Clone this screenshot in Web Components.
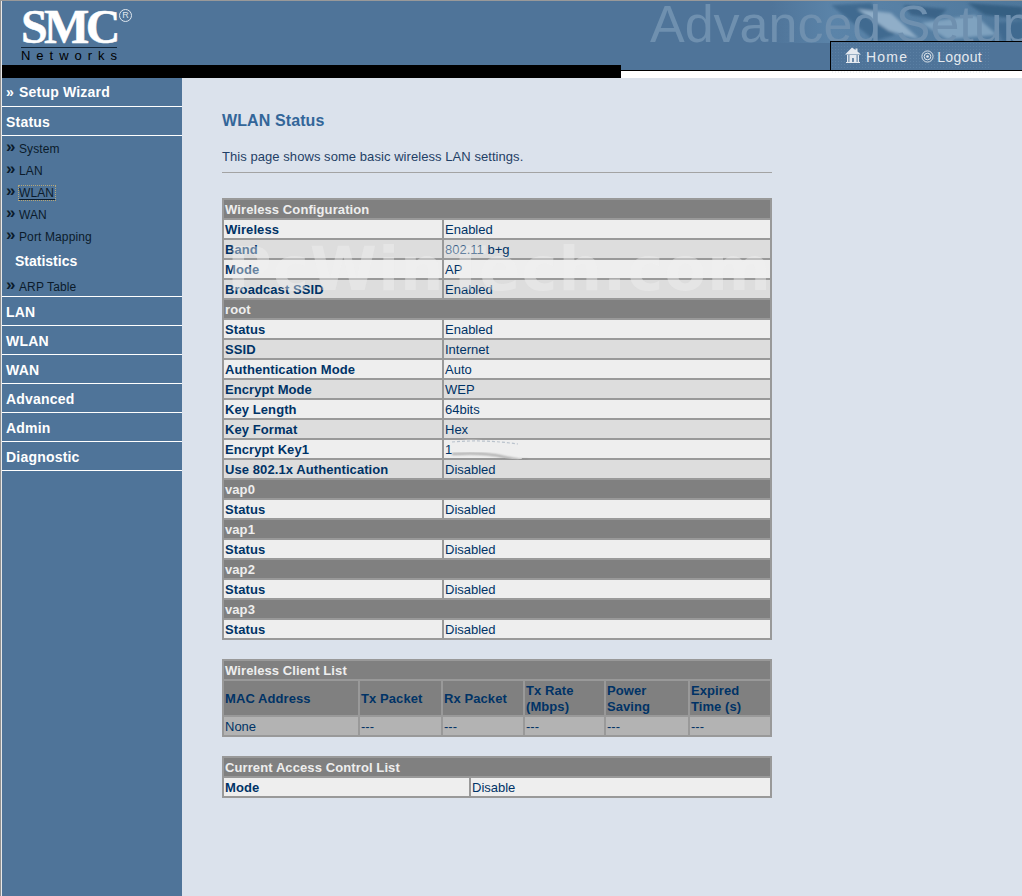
<!DOCTYPE html>
<html>
<head>
<meta charset="utf-8">
<title>WLAN Status</title>
<style>
html, body { margin: 0; padding: 0; background: #dbe2ec; }
body { font-family: "Liberation Sans", Arial, sans-serif; font-size: 12px; }
</style>
</head>
<body>
<router-page>
    <router-header slot="header"></router-header>
    <router-sidebar slot="side">
        <nav-top wizard>Setup Wizard</nav-top>
        <nav-top>Status</nav-top>
        <nav-group>
            <nav-sub>System</nav-sub>
            <nav-sub>LAN</nav-sub>
            <nav-sub current>WLAN</nav-sub>
            <nav-sub>WAN</nav-sub>
            <nav-sub>Port Mapping</nav-sub>
            <nav-heading>Statistics</nav-heading>
            <nav-sub>ARP Table</nav-sub>
        </nav-group>
        <nav-top>LAN</nav-top>
        <nav-top>WLAN</nav-top>
        <nav-top>WAN</nav-top>
        <nav-top>Advanced</nav-top>
        <nav-top>Admin</nav-top>
        <nav-top>Diagnostic</nav-top>
    </router-sidebar>
    <status-panel heading="WLAN Status" intro="This page shows some basic wireless LAN settings.">
        <info-table heading="Wireless Configuration" cols="218px 326px">
            <info-row><b>Wireless</b><span>Enabled</span></info-row>
            <info-row alt><b>Band</b><span>802.11 b+g</span></info-row>
            <info-row><b>Mode</b><span>AP</span></info-row>
            <info-row alt><b>Broadcast SSID</b><span>Enabled</span></info-row>
            <info-row section><b>root</b></info-row>
            <info-row><b>Status</b><span>Enabled</span></info-row>
            <info-row alt><b>SSID</b><span>Internet</span></info-row>
            <info-row><b>Authentication Mode</b><span>Auto</span></info-row>
            <info-row alt><b>Encrypt Mode</b><span>WEP</span></info-row>
            <info-row><b>Key Length</b><span>64bits</span></info-row>
            <info-row alt><b>Key Format</b><span>Hex</span></info-row>
            <info-row><b>Encrypt Key1</b><span>1<key-smudge></key-smudge></span></info-row>
            <info-row alt><b>Use 802.1x Authentication</b><span>Disabled</span></info-row>
            <info-row section><b>vap0</b></info-row>
            <info-row><b>Status</b><span>Disabled</span></info-row>
            <info-row section><b>vap1</b></info-row>
            <info-row><b>Status</b><span>Disabled</span></info-row>
            <info-row section><b>vap2</b></info-row>
            <info-row><b>Status</b><span>Disabled</span></info-row>
            <info-row section><b>vap3</b></info-row>
            <info-row><b>Status</b><span>Disabled</span></info-row>
        </info-table>
        <info-table heading="Wireless Client List" cols="134px 81px 80px 79px 82px 80px">
            <info-row head><b>MAC Address</b><b>Tx Packet</b><b>Rx Packet</b><b>Tx Rate (Mbps)</b><b>Power Saving</b><b>Expired Time (s)</b></info-row>
            <info-row muted><span>None</span><span>---</span><span>---</span><span>---</span><span>---</span><span>---</span></info-row>
        </info-table>
        <info-table heading="Current Access Control List" cols="245px 299px">
            <info-row><b>Mode</b><span>Disable</span></info-row>
        </info-table>
    </status-panel>
</router-page>

<script>
function shadow(el, html) {
    el.attachShadow({ mode: "open" }).innerHTML = html;
}

class RouterPage extends HTMLElement {
    constructor() {
        super();
        shadow(this, `
            <style>
            :host {
                display: flex;
                flex-direction: column;
                width: 1022px;
                height: 896px;
                overflow: hidden;
                box-sizing: border-box;
                border-top: 1px solid #999;
                border-left: 1px solid #8f8f8f;
                background: #dbe2ec;
            }
            .body {
                flex: 1;
                display: flex;
                min-height: 0;
                padding-left: 1px;
                background: #e9e9e9;
            }
            ::slotted(status-panel) { flex: 1; }
            </style>
            <slot name="header"></slot>
            <div class="body"><slot name="side"></slot><slot></slot></div>
        `);
    }
}

class RouterHeader extends HTMLElement {
    constructor() {
        super();
        shadow(this, `
            <style>
            :host {
                display: flex;
                height: 77px;
                background: #fff;
            }
            .left {
                width: 619px;
                display: flex;
                flex-direction: column;
                padding-left: 1px;
                background: #e9e9e9;
            }
            .logo {
                height: 64px;
                background: #4f7499;
                padding-left: 19px;
            }
            .bar { height: 13px; background: #000; }
            .right {
                flex: 1;
                display: flex;
                flex-direction: column;
                min-width: 0;
            }
            .banner {
                position: relative;
                height: 70px;
                flex: none;
                box-sizing: border-box;
                border-bottom: 1px solid #000;
                background: #4f7499;
                overflow: hidden;
            }
            .texture { position: absolute; left: 150px; top: 0; }
            .ghost {
                position: absolute;
                left: 29px;
                top: -7px;
                font-size: 52px;
                line-height: 60px;
                white-space: nowrap;
                color: #6f90af;
            }
            .links {
                position: absolute;
                left: 209px;
                right: 0;
                top: 40px;
                height: 30px;
                box-sizing: border-box;
                border-left: 1px solid #000;
                border-top: 1px solid #000;
                background: #4f7499;
                display: flex;
                align-items: center;
                padding: 0 0 0 14px;
                color: #e4e9ef;
            }
            .links::before {
                content: "";
                position: absolute;
                left: 0;
                top: 0;
                bottom: 0;
                width: 160px;
                background-image: radial-gradient(#5a7fa3 0.6px, transparent 0.8px);
                background-size: 3px 3px;
            }
            .links top-link { position: relative; }
            .fringe {
                height: 2px;
                width: 160px;
                margin-left: 210px;
                background-image: radial-gradient(#c4ccd4 0.6px, transparent 0.8px);
                background-size: 3px 2px;
            }
            </style>
            <div class="left">
                <div class="logo"><smc-logo></smc-logo></div>
                <div class="bar"></div>
            </div>
            <div class="right">
                <div class="banner">
                    <svg class="texture" width="252" height="42" viewBox="0 0 252 42">
                        <defs>
                            <linearGradient id="fade" x1="0" x2="1" y1="0" y2="0">
                                <stop offset="0" stop-color="#4f7499"/>
                                <stop offset=".25" stop-color="#5b84a9"/>
                                <stop offset="1" stop-color="#4f789c"/>
                            </linearGradient>
                            <filter id="soft"><feGaussianBlur stdDeviation="1.6"/></filter>
                        </defs>
                        <rect width="252" height="42" fill="url(#fade)"/>
                        <g filter="url(#soft)">
                            <path d="M60 4 L100 2 L124 34 L104 40 Z" fill="#3f6a90"/>
                            <path d="M86 8 L120 12 L148 38 L118 30 Z" fill="#90aec8"/>
                            <path d="M132 4 L176 8 L166 18 L140 14 Z" fill="#3a6488"/>
                            <path d="M150 22 L204 14 L226 34 L176 38 Z" fill="#7fa2bf"/>
                            <path d="M196 2 L252 6 L250 18 L214 14 Z" fill="#355e82"/>
                            <path d="M224 22 L252 20 L252 40 L232 40 Z" fill="#3f6a90"/>
                        </g>
                    </svg>
                    <div class="ghost">Advanced Setup</div>
                    <div class="links">
                        <top-link icon="home">Home</top-link>
                        <top-link icon="logout">Logout</top-link>
                    </div>
                </div>
                <div class="fringe"></div>
            </div>
        `);
    }
}

class SmcLogo extends HTMLElement {
    constructor() {
        super();
        shadow(this, `
            <style>
            :host {
                display: inline-block;
                position: relative;
                width: 96px;
                padding-top: 5px;
            }
            .mark {
                font: bold 48px/42px "Liberation Serif", "Times New Roman", serif;
                letter-spacing: -3.6px;
                -webkit-text-stroke: .5px #fff;
                color: #fff;
                white-space: nowrap;
                height: 40px;
            }
            .rule { height: 1px; background: #12263a; margin-top: 1px; }
            .sub {
                font: 13px/13px "Liberation Sans", Arial, sans-serif;
                color: #000;
                display: flex;
                justify-content: space-between;
                margin-top: 1px;
            }
            .reg {
                position: absolute;
                left: 98px;
                top: 8px;
                width: 11px;
                height: 11px;
                border: 1px solid #dfe7ef;
                border-radius: 50%;
                color: #dfe7ef;
                font: 9px/11px "Liberation Sans", Arial, sans-serif;
                text-align: center;
            }
            </style>
            <div class="mark">SMC</div>
            <div class="rule"></div>
            <div class="sub"><span>N</span><span>e</span><span>t</span><span>w</span><span>o</span><span>r</span><span>k</span><span>s</span></div>
            <div class="reg">R</div>
        `);
    }
}

const topIcons = {
    home: `<svg width="16" height="16" viewBox="0 0 16 16" fill="#e4e9ef">
        <path d="M7 0.5 L10.5 3 V1.5 H12.5 V4.5 L16 7.4 H0 Z"/>
        <path d="M2 8 H3.4 V15 H2 Z M12.6 8 H14 V15 H12.6 Z M4.4 8 H11.6 V15 H8.8 V11 H7.2 V15 H4.4 Z"/>
        <path d="M1 15 H15 V16 H1 Z"/>
    </svg>`,
    logout: `<svg width="13" height="13" viewBox="0 0 14 14" fill="none" stroke="#e4e9ef">
        <circle cx="7" cy="7" r="6"/>
        <circle cx="7" cy="7" r="3.6"/>
        <circle cx="7" cy="7" r="1.4" fill="#e4e9ef" stroke="none"/>
    </svg>`
};

class TopLink extends HTMLElement {
    constructor() {
        super();
        const home = this.getAttribute("icon") === "home";
        shadow(this, `
            <style>
            :host {
                display: flex;
                align-items: center;
                gap: ${home ? 5 : 3}px;
                margin-right: ${home ? 13 : 0}px;
                padding-top: ${home ? 1 : 0}px;
                font-size: 14px;
                letter-spacing: ${home ? 1.2 : 0.35}px;
            }
            svg { display: block; margin-top: ${home ? -4 : -1}px; }
            </style>
            ${topIcons[this.getAttribute("icon")]}
            <slot></slot>
        `);
    }
}

class RouterSidebar extends HTMLElement {
    constructor() {
        super();
        shadow(this, `
            <style>
            :host {
                display: block;
                width: 180px;
                flex: none;
                background: #4f7499;
            }
            </style>
            <slot></slot>
        `);
    }
}

class NavTop extends HTMLElement {
    constructor() {
        super();
        const wizard = this.hasAttribute("wizard");
        shadow(this, `
            <style>
            :host {
                display: block;
                box-sizing: border-box;
                height: 29px;
                line-height: 30px;
                padding-left: 4px;
                border-bottom: 1px solid #fff;
                color: #fff;
                font-weight: bold;
                font-size: 14px;
                letter-spacing: .2px;
                white-space: nowrap;
            }
            :host([wizard]) { line-height: 28px; }
            span { margin-right: 5px; }
            </style>
            ${wizard ? "<span>»</span>" : ""}<slot></slot>
        `);
    }
}

class NavGroup extends HTMLElement {
    constructor() {
        super();
        shadow(this, `
            <style>
            :host {
                display: block;
                box-sizing: border-box;
                height: 161px;
                padding-top: 2px;
                border-bottom: 1px solid #fff;
            }
            </style>
            <slot></slot>
        `);
    }
}

class NavSub extends HTMLElement {
    constructor() {
        super();
        shadow(this, `
            <style>
            :host {
                display: flex;
                height: 22px;
                line-height: 22px;
                padding-left: 4px;
                color: #0b1b2b;
                font-size: 12px;
                letter-spacing: .12px;
                white-space: nowrap;
            }
            .mark { width: 13px; font-size: 17px; font-weight: bold; line-height: 18px; }
            :host([current]) a {
                display: block;
                box-sizing: border-box;
                height: 14px;
                line-height: 14px;
                margin-top: 4px;
                padding: 0 1px 0 0;
                border-bottom: 1px solid #0b1b2b;
                outline: 1px dotted #b7a777;
            }
            </style>
            <span class="mark">»</span><a><slot></slot></a>
        `);
    }
}

class NavHeading extends HTMLElement {
    constructor() {
        super();
        shadow(this, `
            <style>
            :host {
                display: block;
                height: 28px;
                line-height: 26px;
                padding-left: 13px;
                color: #fff;
                font-weight: bold;
                font-size: 14px;
            }
            </style>
            <slot></slot>
        `);
    }
}

class StatusPanel extends HTMLElement {
    constructor() {
        super();
        shadow(this, `
            <style>
            :host {
                display: block;
                position: relative;
                box-sizing: border-box;
                padding: 34px 0 0 40px;
                background: #dbe2ec;
                min-width: 0;
            }
            .box { width: 550px; }
            h1 {
                margin: 0;
                font-size: 16px;
                line-height: 18px;
                letter-spacing: .1px;
                color: #336699;
            }
            p {
                margin: 19px 0 0;
                font-size: 13px;
                line-height: 16px;
                letter-spacing: .06px;
                color: #1f3f66;
            }
            hr {
                margin: 7px 0 25px;
                height: 1px;
                border: 0;
                background: #a3a3a3;
            }
            .list { display: flex; flex-direction: column; gap: 19px; }
            .watermark {
                position: absolute;
                left: 45px;
                top: 160px;
                font-family: "DejaVu Sans", sans-serif;
                font-size: 61px;
                font-weight: bold;
                line-height: 62px;
                letter-spacing: 1px;
                white-space: nowrap;
                color: rgba(240, 240, 240, .42);
                pointer-events: none;
            }
            </style>
            <div class="box">
                <h1>${this.getAttribute("heading")}</h1>
                <p>${this.getAttribute("intro")}</p>
                <hr>
                <div class="list"><slot></slot></div>
            </div>
            <div class="watermark">PcWinTech.com</div>
        `);
    }
}

class InfoTable extends HTMLElement {
    constructor() {
        super();
        this.style.setProperty("--cols", this.getAttribute("cols"));
        shadow(this, `
            <style>
            :host {
                display: flex;
                flex-direction: column;
                gap: 2px;
                padding: 2px;
                background: #999;
            }
            .title {
                height: 18px;
                line-height: 19px;
                padding-left: 1px;
                background: #808080;
                color: #eee;
                font-weight: bold;
                font-size: 13px;
                letter-spacing: .1px;
            }
            </style>
            <div class="title">${this.getAttribute("heading")}</div>
            <slot></slot>
        `);
    }
}

class InfoRow extends HTMLElement {
    constructor() {
        super();
        shadow(this, `
            <style>
            :host {
                display: grid;
                grid-template-columns: var(--cols);
                gap: 2px;
                color: #003366;
                font-size: 13px;
                --cell: #eeeeee;
            }
            :host([alt]) { --cell: #dddddd; }
            :host([head]) { --cell: #808080; }
            :host([muted]) { --cell: #b3b3b3; }
            :host([section]) { display: block; color: #eee; }
            ::slotted(*) {
                display: flex;
                align-items: center;
                position: relative;
                box-sizing: border-box;
                min-height: 18px;
                line-height: 16px;
                padding: 2px 0 0 1px;
                background: var(--cell);
            }
            ::slotted(b) { letter-spacing: .08px; }
            :host([section]) ::slotted(*) { background: #808080; }
            :host([head]) ::slotted(*) { height: 34px; }
            </style>
            <slot></slot>
        `);
    }
}

class KeySmudge extends HTMLElement {
    constructor() {
        super();
        shadow(this, `
            <style>
            :host {
                position: absolute;
                left: 4px;
                top: -1px;
                width: 92px;
                height: 22px;
            }
            svg { display: block; }
            </style>
            <svg width="92" height="22" viewBox="0 0 92 22">
                <defs><filter id="b"><feGaussianBlur stdDeviation=".8"/></filter></defs>
                <path d="M3 2 C20 0 45 0 68 5 L74 20 C58 21 48 16 30 16 L4 15 Z" fill="#eeeeee"/>
                <path d="M4 15 C22 14 42 14 56 18 C64 20 72 21 80 21" fill="none" stroke="#8c8c8c" stroke-width="1.6" filter="url(#b)"/>
                <path d="M4 3 C26 1 48 2 70 5" fill="none" stroke="#b9c2cc" stroke-width="1.2" stroke-dasharray="3 2"/>
            </svg>
        `);
    }
}

customElements.define("router-page", RouterPage);
customElements.define("router-header", RouterHeader);
customElements.define("smc-logo", SmcLogo);
customElements.define("top-link", TopLink);
customElements.define("router-sidebar", RouterSidebar);
customElements.define("nav-top", NavTop);
customElements.define("nav-group", NavGroup);
customElements.define("nav-sub", NavSub);
customElements.define("nav-heading", NavHeading);
customElements.define("status-panel", StatusPanel);
customElements.define("info-table", InfoTable);
customElements.define("info-row", InfoRow);
customElements.define("key-smudge", KeySmudge);
</script>
</body>
</html>
